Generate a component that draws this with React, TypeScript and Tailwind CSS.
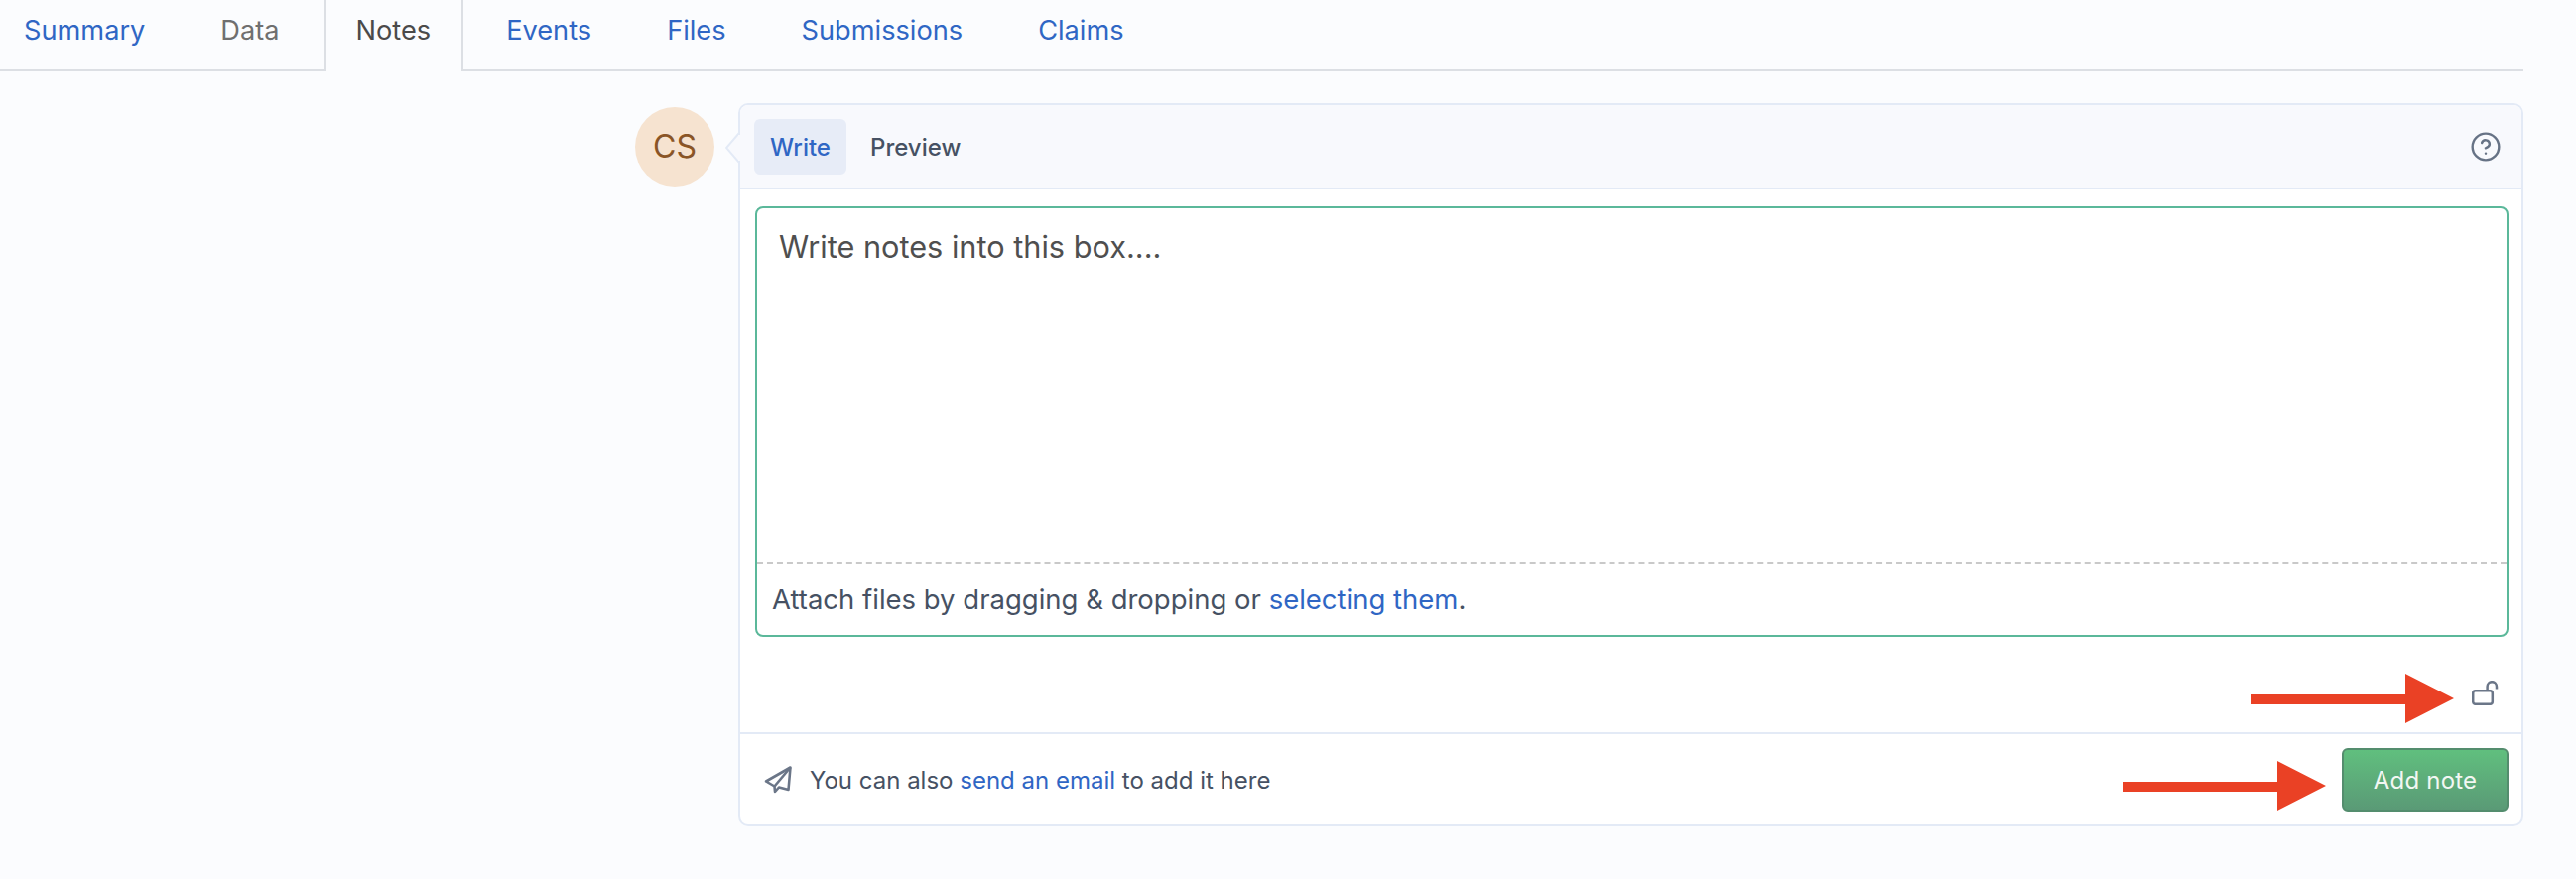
import { CircleHelp } from "lucide-react";

const tabs = ["Summary", "Data", "Notes", "Events", "Files", "Submissions", "Claims"];

function Arrow({ className }: { className: string }) {
  return (
    <svg className={className} width="205" height="50" viewBox="0 0 205 50">
      <path d="M0 21H156V0L205 25L156 50V31H0Z" fill="#ea4125" />
    </svg>
  );
}

export default function App() {
  return (
    <div className="relative h-[886px] w-[2596px] overflow-hidden bg-[#fbfcfe] font-['Inter',sans-serif]">
      <nav className="mr-[53px] flex h-[72px] items-start border-b-2 border-[#dcdfe4] pl-[24px]">
        {tabs.map((t) => {
          if (t === "Notes") {
            return (
              <span
                key={t}
                className="ml-[7px] mr-[5px] h-[72px] border-x-2 border-[#dcdfe4] bg-[#fbfcfe] pl-[30px] pr-[31px] pt-[12px] text-[27.2px] leading-[38px] text-[#4a4a4a]"
              >
                {t}
              </span>
            );
          }
          const color = t === "Data" ? "text-[#6f6f6f]" : "text-[#2f66c4]";
          const pad = t === "Summary" ? "pr-[38px]" : "px-[38px]";
          return (
            <span key={t} className={`${pad} pt-[12px] text-[27.2px] leading-[38px] ${color}`}>
              {t}
            </span>
          );
        })}
      </nav>

      <main className="mr-[53px] mt-[32px] flex pl-[640px]">
        <div className="mt-[4px] flex h-[80px] w-[80px] shrink-0 items-center justify-center rounded-full bg-[#f6e3d0] text-[32px] text-[#8a5526]">
          CS
        </div>
        <section className="relative ml-[24px] flex-1 rounded-[10px] border-2 border-[#e3eaf6] bg-white">
          <svg className="absolute left-[-15px] top-[27px]" width="15" height="32" viewBox="0 0 15 32">
            <path d="M14 1L1 16L14 31Z" fill="#f8f9fd" stroke="#e3eaf6" strokeWidth="2" />
            <path d="M13 3V29H15V3Z" fill="#f8f9fd" />
          </svg>
          <header className="flex h-[85px] items-center rounded-t-[8px] border-b-2 border-[#e3eaf6] bg-[#f8f9fd] pl-[14px] pr-[20px]">
            <span className="flex h-[56px] w-[93px] items-center justify-center rounded-[6px] bg-[#e7ecf7] pt-[2px] text-[24px] font-medium text-[#2f66c4]">
              Write
            </span>
            <span className="ml-[24px] pt-[3px] text-[24px] font-medium text-[#465163]">Preview</span>
            <CircleHelp className="ml-auto text-[#667285]" size={32} strokeWidth={1.8} />
          </header>
          <div className="pl-[15px] pr-[13px] pt-[17px]">
            <div className="flex h-[434px] flex-col rounded-[8px] border-2 border-[#5bb89a]">
              <div className="flex-1 px-[22px] pt-[17px] text-[30.7px] leading-[44px] text-[#4f4f4f]">
                Write notes into this box....
              </div>
              <div className="flex h-[74px] items-center border-t-2 border-dashed border-[#c9c9c9] px-[15px] pt-[2px] text-[27.5px] text-[#465163]">
                <span>
                  Attach files by dragging &amp; dropping or <span className="text-[#2f66c4]">selecting them</span>.
                </span>
              </div>
            </div>
          </div>
          <div className="flex h-[96px] items-start justify-end pr-[23px] pt-[44px]">
            <svg width="27" height="25" viewBox="0 0 27 25" fill="none" stroke="#6b7688" strokeWidth="2.5">
              <rect x="1.2" y="10.2" width="19.6" height="13.6" rx="2.5" />
              <path d="M15.6 10V5.9a4.7 4.7 0 0 1 9.4 0V8.5" />
            </svg>
          </div>
          <footer className="flex h-[93px] items-center border-t-2 border-[#e3eaf6] pl-[24px] pr-[13px]">
            <svg width="28" height="28" viewBox="0 0 28 28" fill="none" stroke="#6b7688" strokeWidth="2.6" strokeLinejoin="round">
              <path d="M26.5 1.5L2 15.5L10.5 20.5L11 26L15 21.5L24.5 24Z" />
              <path d="M26.5 1.5L10.5 20.5" />
            </svg>
            <span className="ml-[18px] pt-[3px] text-[24px] text-[#465163]">
              You can also <span className="text-[#2f66c4]">send an email</span> to add it here
            </span>
            <button className="ml-auto h-[64px] w-[168px] rounded-[6px] border-2 border-[#548d6e] bg-gradient-to-b from-[#60bf7e] to-[#5a9a76] pt-[2px] text-[24px] tracking-[0.2px] text-[#f2f7f3]">
              Add note
            </button>
          </footer>
        </section>
      </main>

      <Arrow className="absolute left-[2268px] top-[679px]" />
      <Arrow className="absolute left-[2139px] top-[767px]" />
    </div>
  );
}
